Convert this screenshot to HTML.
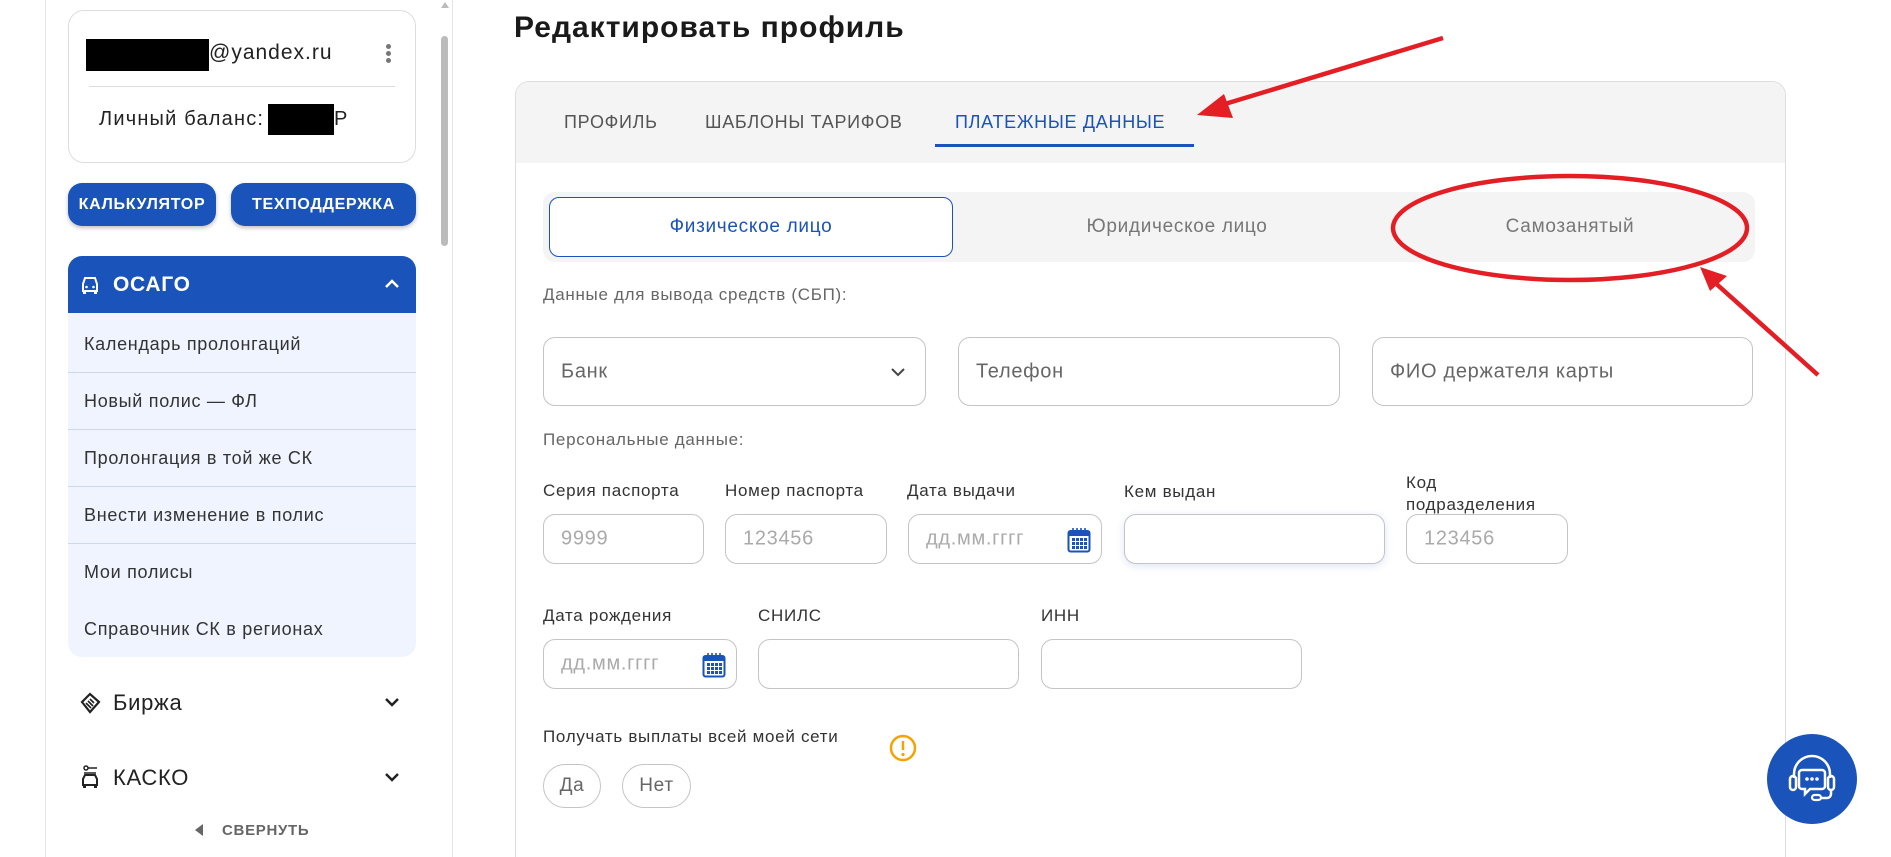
<!DOCTYPE html>
<html style="overflow:hidden"><head><meta charset="utf-8"><style>
*{box-sizing:border-box;margin:0;padding:0}
body{width:1891px;height:857px;overflow:hidden;background:#fff;font-family:"Liberation Sans",sans-serif;position:relative;color:#333;letter-spacing:0.7px}
#w{position:absolute;left:0;top:0;width:1891px;height:857px;overflow:hidden}
.a{position:absolute}
.sb{left:45px;top:-2px;width:408px;height:859px;border-left:1px solid #e4e4e4;border-right:1px solid #e4e4e4}
.card{left:68px;top:10px;width:348px;height:153px;border:1px solid #ddd;border-radius:16px}
.btn{top:183px;height:43px;background:#1a53b9;border-radius:14px;color:#fff;font-weight:bold;font-size:16px;display:flex;align-items:center;justify-content:center;box-shadow:0 2px 4px rgba(0,0,0,.25)}
.item{left:68px;width:348px;height:57px;line-height:57px;padding-left:16px;font-size:18px;color:#333;border-bottom:1px solid #d0d8e6}
.inp{border:1px solid #c4c4c4;border-radius:12px;background:#fff}
.lbl{font-size:17px;color:#333}
.ph{font-size:20px;color:#aaa;position:absolute;left:17px;top:50%;transform:translateY(-50%)}
.ph2{font-size:20px;color:#666;position:absolute;left:17px;top:50%;transform:translateY(-50%)}
</style></head><body><div id="w">
<div class="a sb"></div>
<div class="a" style="left:441px;top:36px;width:7px;height:210px;background:#bbb;border-radius:4px"></div>
<div class="a" style="left:441px;top:2px;width:0;height:0;border-left:4px solid transparent;border-right:4px solid transparent;border-bottom:6px solid #bbb"></div>
<div class="a card"></div>
<div class="a" style="left:86px;top:39px;width:123px;height:32px;background:#000"></div>
<div class="a" style="left:209px;top:41px;font-size:21px;color:#222;letter-spacing:1px">@yandex.ru</div>
<div class="a" style="left:386px;top:44px;width:5px;height:5px;border-radius:50%;background:#777;box-shadow:0 7px 0 #777,0 14px 0 #777"></div>
<div class="a" style="left:89px;top:86px;width:306px;height:1px;background:#ddd"></div>
<div class="a" style="left:99px;top:108px;font-size:20px;color:#222;letter-spacing:1.2px">Личный баланс:</div>
<div class="a" style="left:268px;top:104px;width:66px;height:31px;background:#000"></div>
<div class="a" style="left:334px;top:108px;font-size:20px;color:#222">Р</div>
<div class="a btn" style="left:68px;width:148px">КАЛЬКУЛЯТОР</div>
<div class="a btn" style="left:231px;width:185px">ТЕХПОДДЕРЖКА</div>
<div class="a" style="left:68px;top:256px;width:348px;height:401px;background:#eff4fe;border-radius:14px"></div>
<div class="a" style="left:68px;top:256px;width:348px;height:57px;background:#1a53b9;border-radius:14px 14px 0 0"></div>
<svg class="a" style="left:80px;top:276px" width="20" height="18" viewBox="0 0 20 18"><path d="M3 8 L5 2 H15 L17 8 V15 H3 Z" fill="none" stroke="#fff" stroke-width="2"/><rect x="3" y="15" width="3" height="3" fill="#fff"/><rect x="14" y="15" width="3" height="3" fill="#fff"/><circle cx="6.5" cy="11" r="1.3" fill="#fff"/><circle cx="13.5" cy="11" r="1.3" fill="#fff"/></svg>
<div class="a" style="left:113px;top:273px;font-size:21px;color:#fff;font-weight:bold">ОСАГО</div>
<svg class="a" style="left:384px;top:279px" width="16" height="10"><path d="M2 8 L8 2 L14 8" fill="none" stroke="#fff" stroke-width="2.5"/></svg>
<div class="a item" style="top:316px">Календарь пролонгаций</div>
<div class="a item" style="top:373px">Новый полис — ФЛ</div>
<div class="a item" style="top:430px">Пролонгация в той же СК</div>
<div class="a item" style="top:487px">Внести изменение в полис</div>
<div class="a item" style="top:544px;border:none">Мои полисы</div>
<div class="a item" style="top:601px;border:none">Справочник СК в регионах</div>
<svg class="a" style="left:79px;top:692px" width="22" height="22" viewBox="0 0 22 22"><path d="M3 10 L11 2 L20 10 L11 20 Z" fill="none" stroke="#222" stroke-width="2.2"/><path d="M7 11 L12 16 M9 9 L14 14 M11 7 L15 11" stroke="#222" stroke-width="1.6"/></svg>
<div class="a" style="left:113px;top:690px;font-size:22px;color:#222">Биржа</div>
<svg class="a" style="left:384px;top:697px" width="16" height="10"><path d="M2 2 L8 8 L14 2" fill="none" stroke="#222" stroke-width="2.5"/></svg>
<svg class="a" style="left:81px;top:765px" width="18" height="24" viewBox="0 0 18 24"><circle cx="5" cy="3" r="2" fill="none" stroke="#222" stroke-width="1.5"/><path d="M7 3 H16 M3 8 H15" stroke="#222" stroke-width="1.5"/><path d="M2 14 L4 10 H14 L16 14 V20 H2 Z" fill="none" stroke="#222" stroke-width="2"/><rect x="2" y="20" width="3" height="3" fill="#222"/><rect x="13" y="20" width="3" height="3" fill="#222"/></svg>
<div class="a" style="left:113px;top:765px;font-size:22px;color:#222">КАСКО</div>
<svg class="a" style="left:384px;top:772px" width="16" height="10"><path d="M2 2 L8 8 L14 2" fill="none" stroke="#222" stroke-width="2.5"/></svg>
<div class="a" style="left:195px;top:824px;width:0;height:0;border-top:6px solid transparent;border-bottom:6px solid transparent;border-right:8px solid #666"></div>
<div class="a" style="left:222px;top:822px;font-size:15px;font-weight:bold;color:#666">СВЕРНУТЬ</div>

<div class="a" style="left:514px;top:11px;font-size:30px;font-weight:bold;color:#1a1a1a;letter-spacing:1px">Редактировать профиль</div>
<div class="a" style="left:515px;top:81px;width:1271px;height:776px;border:1px solid #ddd;border-bottom:none;border-radius:14px 14px 0 0;overflow:hidden">
<div style="height:81px;background:#f4f4f4"></div></div>
<div class="a" style="left:564px;top:112px;font-size:18px;color:#555">ПРОФИЛЬ</div>
<div class="a" style="left:705px;top:112px;font-size:18px;color:#555">ШАБЛОНЫ ТАРИФОВ</div>
<div class="a" style="left:955px;top:112px;font-size:18px;color:#1a53b9">ПЛАТЕЖНЫЕ ДАННЫЕ</div>
<div class="a" style="left:935px;top:144px;width:259px;height:3px;background:#1a53b9"></div>
<div class="a" style="left:543px;top:192px;width:1212px;height:70px;background:#f4f4f4;border-radius:12px"></div>
<div class="a" style="left:549px;top:197px;width:404px;height:60px;background:#fff;border:1px solid #1a53b9;border-radius:10px;display:flex;align-items:center;justify-content:center;font-size:19px;color:#1a53b9">Физическое лицо</div>
<div class="a" style="left:1000px;top:197px;width:354px;height:60px;display:flex;align-items:center;justify-content:center;font-size:19px;color:#777">Юридическое лицо</div>
<div class="a" style="left:1400px;top:197px;width:340px;height:60px;display:flex;align-items:center;justify-content:center;font-size:19px;color:#777">Самозанятый</div>

<div class="a" style="left:543px;top:285px;font-size:17px;color:#666">Данные для вывода средств (СБП):</div>
<div class="a inp" style="left:543px;top:337px;width:383px;height:69px"><span class="ph2">Банк</span>
<svg style="position:absolute;right:20px;top:30px" width="14" height="9"><path d="M1 1 L7 7 L13 1" fill="none" stroke="#444" stroke-width="2"/></svg></div>
<div class="a inp" style="left:958px;top:337px;width:382px;height:69px"><span class="ph2">Телефон</span></div>
<div class="a inp" style="left:1372px;top:337px;width:381px;height:69px"><span class="ph2">ФИО держателя карты</span></div>

<div class="a" style="left:543px;top:430px;font-size:17px;color:#666">Персональные данные:</div>
<div class="a lbl" style="left:543px;top:481px">Серия паспорта</div>
<div class="a lbl" style="left:725px;top:481px">Номер паспорта</div>
<div class="a lbl" style="left:907px;top:481px">Дата выдачи</div>
<div class="a lbl" style="left:1124px;top:482px">Кем выдан</div>
<div class="a lbl" style="left:1406px;top:472px;line-height:22px">Код<br>подразделения</div>
<div class="a inp" style="left:543px;top:514px;width:161px;height:50px"><span class="ph">9999</span></div>
<div class="a inp" style="left:725px;top:514px;width:162px;height:50px"><span class="ph">123456</span></div>
<div class="a inp" style="left:908px;top:514px;width:194px;height:50px"><span class="ph">дд.мм.гггг</span>
<svg style="position:absolute;right:10px;top:12px" width="24" height="26" viewBox="0 0 24 26"><rect x="1.5" y="4" width="21" height="20.5" rx="2" fill="none" stroke="#1a53b9" stroke-width="2"/><rect x="1.5" y="4" width="21" height="5" fill="#1a53b9"/><path d="M6 1 V6 M10 1 V6 M14 1 V6 M18 1 V6" stroke="#1a53b9" stroke-width="1.6"/><g fill="#1a53b9"><rect x="5" y="11" width="3" height="3"/><rect x="9" y="11" width="3" height="3"/><rect x="13" y="11" width="3" height="3"/><rect x="17" y="11" width="3" height="3"/><rect x="5" y="15" width="3" height="3"/><rect x="9" y="15" width="3" height="3"/><rect x="13" y="15" width="3" height="3"/><rect x="17" y="15" width="3" height="3"/><rect x="5" y="19" width="3" height="3"/><rect x="9" y="19" width="3" height="3"/><rect x="13" y="19" width="3" height="3"/><rect x="17" y="19" width="3" height="3"/></g></svg></div>
<div class="a inp" style="left:1124px;top:514px;width:261px;height:50px;box-shadow:0 2px 8px rgba(26,83,185,.15)"></div>
<div class="a inp" style="left:1406px;top:514px;width:162px;height:50px"><span class="ph">123456</span></div>

<div class="a lbl" style="left:543px;top:606px">Дата рождения</div>
<div class="a lbl" style="left:758px;top:606px">СНИЛС</div>
<div class="a lbl" style="left:1041px;top:606px">ИНН</div>
<div class="a inp" style="left:543px;top:639px;width:194px;height:50px"><span class="ph">дд.мм.гггг</span>
<svg style="position:absolute;right:10px;top:12px" width="24" height="26" viewBox="0 0 24 26"><rect x="1.5" y="4" width="21" height="20.5" rx="2" fill="none" stroke="#1a53b9" stroke-width="2"/><rect x="1.5" y="4" width="21" height="5" fill="#1a53b9"/><path d="M6 1 V6 M10 1 V6 M14 1 V6 M18 1 V6" stroke="#1a53b9" stroke-width="1.6"/><g fill="#1a53b9"><rect x="5" y="11" width="3" height="3"/><rect x="9" y="11" width="3" height="3"/><rect x="13" y="11" width="3" height="3"/><rect x="17" y="11" width="3" height="3"/><rect x="5" y="15" width="3" height="3"/><rect x="9" y="15" width="3" height="3"/><rect x="13" y="15" width="3" height="3"/><rect x="17" y="15" width="3" height="3"/><rect x="5" y="19" width="3" height="3"/><rect x="9" y="19" width="3" height="3"/><rect x="13" y="19" width="3" height="3"/><rect x="17" y="19" width="3" height="3"/></g></svg></div>
<div class="a inp" style="left:758px;top:639px;width:261px;height:50px"></div>
<div class="a inp" style="left:1041px;top:639px;width:261px;height:50px"></div>

<div class="a lbl" style="left:543px;top:727px">Получать выплаты всей моей сети</div>
<svg class="a" style="left:889px;top:734px" width="28" height="28"><circle cx="14" cy="14" r="12" fill="none" stroke="#f5a300" stroke-width="2.5"/><path d="M14 7 V16" stroke="#f5a300" stroke-width="2.5"/><circle cx="14" cy="20.5" r="1.6" fill="#f5a300"/></svg>
<div class="a" style="left:543px;top:764px;width:58px;height:44px;border:1px solid #c4c4c4;border-radius:22px;display:flex;align-items:center;justify-content:center;font-size:19px;color:#666">Да</div>
<div class="a" style="left:622px;top:764px;width:69px;height:44px;border:1px solid #c4c4c4;border-radius:22px;display:flex;align-items:center;justify-content:center;font-size:19px;color:#666">Нет</div>

<div class="a" style="left:1767px;top:734px;width:90px;height:90px;border-radius:50%;background:#1a53b9"></div>
<svg class="a" style="left:1782px;top:750px" width="60" height="60" viewBox="0 0 60 60"><path d="M12 28 V24 A18 18 0 0 1 48 24 V28" fill="none" stroke="#fff" stroke-width="2.5"/><rect x="8" y="26" width="6" height="14" rx="3" fill="none" stroke="#fff" stroke-width="2.5"/><rect x="46" y="26" width="6" height="14" rx="3" fill="none" stroke="#fff" stroke-width="2.5"/><path d="M20 20 H40 A3 3 0 0 1 43 23 V36 A3 3 0 0 1 40 39 H28 L23 44 V39 H20 A3 3 0 0 1 17 36 V23 A3 3 0 0 1 20 20 Z" fill="none" stroke="#fff" stroke-width="2.5"/><circle cx="25" cy="29" r="1.8" fill="#fff"/><circle cx="30" cy="29" r="1.8" fill="#fff"/><circle cx="35" cy="29" r="1.8" fill="#fff"/><path d="M49 40 V44 A4 4 0 0 1 45 48 H38" fill="none" stroke="#fff" stroke-width="2.5"/><rect x="30" y="45" width="9" height="5" rx="2.5" fill="none" stroke="#fff" stroke-width="2.2"/></svg>

<svg class="a" style="left:0;top:0" width="1891" height="857">
<ellipse cx="1570" cy="228" rx="177" ry="52" fill="none" stroke="#e31e24" stroke-width="4.5"/>
<line x1="1443" y1="38" x2="1215" y2="107" stroke="#e31e24" stroke-width="4.5"/>
<polygon points="1197,115 1224,94 1233,118" fill="#e31e24"/>
<line x1="1818" y1="375" x2="1712" y2="280" stroke="#e31e24" stroke-width="4.5"/>
<polygon points="1700,267 1727,276 1710,291" fill="#e31e24"/>
</svg>
</div></body></html>
